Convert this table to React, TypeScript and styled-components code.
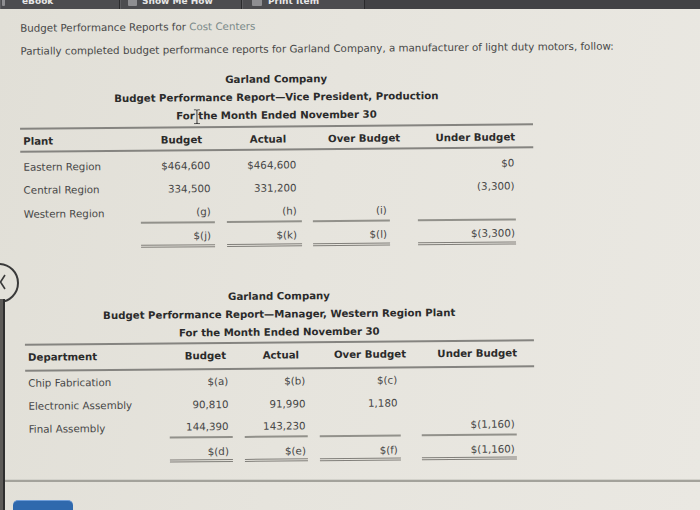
import React from 'react';
import styled, { createGlobalStyle } from 'styled-components';

type Rule = 'none' | 'single' | 'double';

interface Cell {
  v: string;
  rule?: Rule;
}

interface RowData {
  label: string;
  cells: Cell[];
  h: number;
  pt?: number;
}

interface ReportData {
  titles: string[];
  x: number;
  w: number;
  mt: number;
  titleMb: number;
  headCols: string;
  headPt: number;
  headPb: number;
  heads: string[];
  bodyCols: string;
  bodyPt: number;
  inset: number[];
  pad: number[];
  labelPad: number;
  rows: RowData[];
  cursor?: boolean;
}

const GlobalStyle = createGlobalStyle`
  html, body {
    margin: 0;
    padding: 0;
  }
  body {
    background: #e5e3dc;
    font-family: "DejaVu Sans", Verdana, sans-serif;
    overflow: hidden;
  }
`;

const Page = styled.div`
  position: relative;
  width: 700px;
  height: 510px;
  overflow: hidden;
  background: linear-gradient(100deg, #e1dfd7 0%, #e6e4dd 45%, #eae8e2 100%);
  font-family: "DejaVu Sans", Verdana, sans-serif;
`;

const TopBar = styled.header`
  position: relative;
  z-index: 3;
  display: flex;
  height: 9px;
  overflow: hidden;
  background: #424245;
`;

const Tab = styled.div<{ $w: number; $pl: number; $gap: number }>`
  box-sizing: border-box;
  width: ${p => p.$w}px;
  padding-left: ${p => p.$pl}px;
  display: flex;
  align-items: flex-start;
  gap: ${p => p.$gap}px;
  background: #4c4c4f;
  border-left: 1px solid #5e5e61;
  border-right: 1px solid #2a2a2c;
`;

const TabIcon = styled.span<{ $w: number }>`
  flex: none;
  width: ${p => p.$w}px;
  height: 7px;
  margin-top: -1px;
  background: #8e8e91;
  border-radius: 1px;
`;

const TabLabel = styled.span`
  margin-top: -4px;
  font-size: 9px;
  line-height: 10px;
  font-weight: bold;
  color: #e6e6e6;
  white-space: nowrap;
`;

const Content = styled.main`
  transform: rotate(-0.5deg);
  transform-origin: 0 0;
  padding: 13px 0 16.4px;
  color: #474747;
  font-size: 10.3px;
  line-height: 12px;
`;

const Intro = styled.p<{ $mt: number }>`
  margin: ${p => p.$mt}px 0 0;
  padding-left: 20px;
  white-space: nowrap;
`;

const Muted = styled.span`
  color: #7b8a89;
`;

const Report = styled.section<{ $x: number; $w: number; $mt: number }>`
  position: relative;
  margin: ${p => p.$mt}px 0 0 ${p => p.$x}px;
  width: ${p => p.$w}px;
`;

const Titles = styled.div<{ $mb: number }>`
  position: relative;
  margin-bottom: ${p => p.$mb}px;
  text-align: center;
  font-weight: bold;
  font-size: 10.2px;
  line-height: 18px;
  color: #2b2b2b;
  white-space: nowrap;
`;

const Cursor = styled.svg`
  position: absolute;
  left: 173px;
  top: 38px;
`;

const Sheet = styled.div`
  border-top: 2px solid #858480;
`;

const HeadRow = styled.div<{ $cols: string; $pt: number; $pb: number }>`
  display: grid;
  grid-template-columns: ${p => p.$cols};
  padding: ${p => p.$pt}px 0 ${p => p.$pb}px;
  border-bottom: 2px solid #858480;
  font-weight: bold;
  font-size: 10.2px;
  color: #2b2b2b;
  white-space: nowrap;
`;

const HeadCell = styled.div<{ $first?: boolean }>`
  text-align: ${p => (p.$first ? 'left' : 'right')};
  padding: ${p => (p.$first ? '0 0 0 3px' : '0 4px 0 0')};
`;

const Body = styled.div<{ $pt: number }>`
  padding-top: ${p => p.$pt}px;
`;

const Row = styled.div<{ $cols: string; $h: number; $pt: number }>`
  box-sizing: border-box;
  display: grid;
  grid-template-columns: ${p => p.$cols};
  height: ${p => p.$h}px;
  padding-top: ${p => p.$pt}px;
  align-items: center;
  white-space: nowrap;
`;

const RowLabel = styled.div<{ $pl: number }>`
  padding-left: ${p => p.$pl}px;
`;

const Amount = styled.div<{ $inset: number; $pad: number; $rule: Rule }>`
  align-self: stretch;
  display: flex;
  align-items: center;
  justify-content: flex-end;
  margin-left: ${p => p.$inset}px;
  padding-right: ${p => p.$pad}px;
  border-bottom: ${p =>
    p.$rule === 'single'
      ? '2px solid #92918b'
      : p.$rule === 'double'
      ? '3px double #817f7a'
      : 'none'};
`;

const Footer = styled.footer`
  border-top: 2px solid #a3a29b;
  box-shadow: 0 -1px 0 #d3d2cb;
  padding: 18px 0 0 13px;
`;

const NextButton = styled.div`
  box-sizing: border-box;
  width: 60px;
  height: 14px;
  background: #2f69ad;
  border-top: 1px solid #6f9dd8;
  border-radius: 5px 5px 0 0;
`;

const Handle = styled.div`
  position: absolute;
  z-index: 2;
  left: -21px;
  top: 263px;
  width: 36px;
  height: 36px;
  border: 2px solid #3a3a3a;
  border-radius: 50%;
  background: #e3e1d9;
`;

const Chevron = styled.svg`
  position: absolute;
  left: 18px;
  top: 9px;
`;

const Rail = styled.div`
  position: absolute;
  z-index: 2;
  left: 0;
  top: 299px;
  bottom: 0;
  width: 5px;
  background: linear-gradient(90deg, #5d5b58 0 60%, #2f2f2f 60% 100%);
`;

const reports: ReportData[] = [
  {
    titles: [
      'Garland Company',
      'Budget Performance Report\u2014Vice President, Production',
      'For the Month Ended November 30',
    ],
    x: 19,
    w: 513,
    mt: 15.8,
    titleMb: 1.5,
    headCols: '131px 55px 84px 114px 115px 14px',
    headPt: 6,
    headPb: 3,
    heads: ['Plant', 'Budget', 'Actual', 'Over Budget', 'Under Budget'],
    bodyCols: '108px 86px 87px 88px 126px 18px',
    bodyPt: 2,
    inset: [12, 12, 11, 28],
    pad: [4, 5, 3, 1],
    labelPad: 3,
    cursor: true,
    rows: [
      {
        label: 'Eastern Region',
        h: 23.5,
        cells: [{ v: '$464,600' }, { v: '$464,600' }, { v: '' }, { v: '$0' }],
      },
      {
        label: 'Central Region',
        h: 23.5,
        cells: [{ v: '334,500' }, { v: '331,200' }, { v: '' }, { v: '(3,300)' }],
      },
      {
        label: 'Western Region',
        h: 23,
        cells: [
          { v: '(g)', rule: 'single' },
          { v: '(h)', rule: 'single' },
          { v: '(i)', rule: 'single' },
          { v: '', rule: 'single' },
        ],
      },
      {
        label: '',
        h: 24,
        pt: 3,
        cells: [
          { v: '$(j)', rule: 'double' },
          { v: '$(k)', rule: 'double' },
          { v: '$(l)', rule: 'double' },
          { v: '$(3,300)', rule: 'double' },
        ],
      },
    ],
  },
  {
    titles: [
      'Garland Company',
      'Budget Performance Report\u2014Manager, Western Region Plant',
      'For the Month Ended November 30',
    ],
    x: 22,
    w: 509,
    mt: 40.5,
    titleMb: 0,
    headCols: '148px 57px 73px 107px 111px 13px',
    headPt: 6,
    headPb: 6,
    heads: ['Department', 'Budget', 'Actual', 'Over Budget', 'Under Budget'],
    bodyCols: '133px 74px 75px 93px 116px 18px',
    bodyPt: 0,
    inset: [11, 12, 12, 21],
    pad: [4, 2, 3, 2],
    labelPad: 3,
    rows: [
      {
        label: 'Chip Fabrication',
        h: 23.25,
        cells: [{ v: '$(a)' }, { v: '$(b)' }, { v: '$(c)' }, { v: '' }],
      },
      {
        label: 'Electronic Assembly',
        h: 23.25,
        cells: [{ v: '90,810' }, { v: '91,990' }, { v: '1,180' }, { v: '' }],
      },
      {
        label: 'Final Assembly',
        h: 21.5,
        cells: [
          { v: '144,390', rule: 'single' },
          { v: '143,230', rule: 'single' },
          { v: '', rule: 'single' },
          { v: '$(1,160)', rule: 'single' },
        ],
      },
      {
        label: '',
        h: 24.5,
        pt: 4.5,
        cells: [
          { v: '$(d)', rule: 'double' },
          { v: '$(e)', rule: 'double' },
          { v: '$(f)', rule: 'double' },
          { v: '$(1,160)', rule: 'double' },
        ],
      },
    ],
  },
];

const BudgetReport: React.FC<{ r: ReportData }> = ({ r }) => (
  <Report $x={r.x} $w={r.w} $mt={r.mt}>
    <Titles $mb={r.titleMb}>
      {r.titles.map(t => (
        <div key={t}>{t}</div>
      ))}
      {r.cursor && (
        <Cursor width="8" height="15" viewBox="0 0 8 15">
          <path
            d="M1 0.5 H3 Q4 0.5 4 2 V13 Q4 14.5 3 14.5 H1 M7 0.5 H5 Q4 0.5 4 2 M4 13 Q4 14.5 5 14.5 H7"
            fill="none"
            stroke="#3a3a3a"
            strokeWidth="1"
          />
        </Cursor>
      )}
    </Titles>
    <Sheet>
      <HeadRow $cols={r.headCols} $pt={r.headPt} $pb={r.headPb}>
        {r.heads.map((h, i) => (
          <HeadCell key={h} $first={i === 0}>
            {h}
          </HeadCell>
        ))}
      </HeadRow>
      <Body $pt={r.bodyPt}>
        {r.rows.map((row, ri) => (
          <Row key={ri} $cols={r.bodyCols} $h={row.h} $pt={row.pt ?? 0}>
            <RowLabel $pl={r.labelPad}>{row.label}</RowLabel>
            {row.cells.map((c, ci) => (
              <Amount key={ci} $inset={r.inset[ci]} $pad={r.pad[ci]} $rule={c.rule ?? 'none'}>
                {c.v}
              </Amount>
            ))}
          </Row>
        ))}
      </Body>
    </Sheet>
  </Report>
);

export default function App() {
  return (
    <Page>
      <GlobalStyle />
      <TopBar>
        <Tab $w={120} $pl={1} $gap={17}>
          <TabIcon $w={3} />
          <TabLabel>eBook</TabLabel>
        </Tab>
        <Tab $w={122} $pl={7} $gap={5}>
          <TabIcon $w={9} />
          <TabLabel>Show Me How</TabLabel>
        </Tab>
        <Tab $w={123} $pl={9} $gap={6}>
          <TabIcon $w={10} />
          <TabLabel>Print Item</TabLabel>
        </Tab>
      </TopBar>
      <Content>
        <Intro $mt={0}>
          Budget Performance Reports for <Muted>Cost Centers</Muted>
        </Intro>
        <Intro $mt={10.8}>
          Partially completed budget performance reports for Garland Company, a manufacturer of light duty
          motors, follow:
        </Intro>
        {reports.map(r => (
          <BudgetReport key={r.titles[1]} r={r} />
        ))}
      </Content>
      <Footer>
        <NextButton />
      </Footer>
      <Handle>
        <Chevron width="8" height="16" viewBox="0 0 8 16">
          <path d="M6 1 L1.5 8 L6 15" fill="none" stroke="#3a3a3a" strokeWidth="1.6" />
        </Chevron>
      </Handle>
      <Rail />
    </Page>
  );
}
